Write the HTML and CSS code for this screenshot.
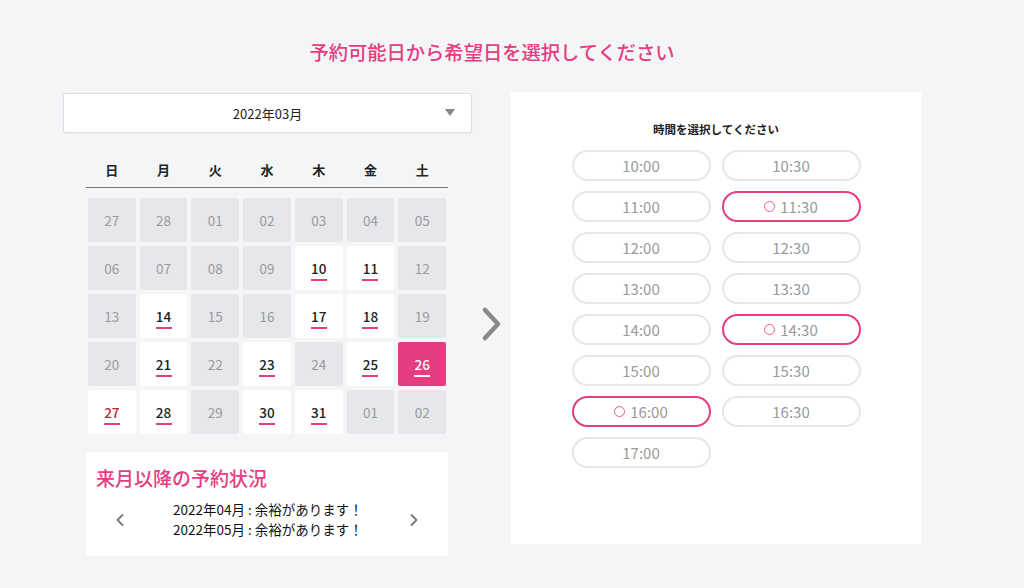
FILE: index.html
```html
<!DOCTYPE html>
<html lang="ja">

<head>
    <meta charset="UTF-8">
    <meta name="viewport" content="width=device-width, initial-scale=1.0">
    <title>予約</title>
    <link rel="stylesheet" href="styles.css">
</head>

<body>
    <div class="page">
        <h1 class="title">予約可能日から希望日を選択してください</h1>

        <div class="main">
            <!-- 左：カレンダー -->
            <div class="left">
                <div class="select">
                    <span>2022年03月</span>
                    <i class="caret"></i>
                </div>

                <div class="calendar">
                    <div class="week">
                        <span>日</span><span>月</span><span>火</span><span>水</span><span>木</span><span>金</span><span>土</span>
                    </div>
                    <div class="days">
                        <div class="day">27</div>
                        <div class="day">28</div>
                        <div class="day">01</div>
                        <div class="day">02</div>
                        <div class="day">03</div>
                        <div class="day">04</div>
                        <div class="day">05</div>

                        <div class="day">06</div>
                        <div class="day">07</div>
                        <div class="day">08</div>
                        <div class="day">09</div>
                        <div class="day open">10</div>
                        <div class="day open">11</div>
                        <div class="day">12</div>

                        <div class="day">13</div>
                        <div class="day open">14</div>
                        <div class="day">15</div>
                        <div class="day">16</div>
                        <div class="day open">17</div>
                        <div class="day open">18</div>
                        <div class="day">19</div>

                        <div class="day">20</div>
                        <div class="day open">21</div>
                        <div class="day">22</div>
                        <div class="day open">23</div>
                        <div class="day">24</div>
                        <div class="day open">25</div>
                        <div class="day open active">26</div>

                        <div class="day open sun">27</div>
                        <div class="day open">28</div>
                        <div class="day">29</div>
                        <div class="day open">30</div>
                        <div class="day open">31</div>
                        <div class="day">01</div>
                        <div class="day">02</div>
                    </div>
                </div>

                <div class="next">
                    <h2>来月以降の予約状況</h2>
                    <div class="next-body">
                        <svg class="chev" viewBox="0 0 8 12" width="8" height="12">
                            <path d="M6.5 1 L1.5 6 L6.5 11" />
                        </svg>
                        <div class="next-text">
                            <p>2022年04月 : 余裕があります！</p>
                            <p>2022年05月 : 余裕があります！</p>
                        </div>
                        <svg class="chev" viewBox="0 0 8 12" width="8" height="12">
                            <path d="M1.5 1 L6.5 6 L1.5 11" />
                        </svg>
                    </div>
                </div>
            </div>

            <!-- 中央の矢印 -->
            <div class="arrow">
                <svg viewBox="0 0 22 36" width="22" height="36">
                    <path d="M4 4 L17 18 L4 32" />
                </svg>
            </div>

            <!-- 右：時間 -->
            <div class="right">
                <p class="sub">時間を選択してください</p>
                <div class="times">
                    <button>10:00</button>
                    <button>10:30</button>
                    <button>11:00</button>
                    <button class="ok">11:30</button>
                    <button>12:00</button>
                    <button>12:30</button>
                    <button>13:00</button>
                    <button>13:30</button>
                    <button>14:00</button>
                    <button class="ok">14:30</button>
                    <button>15:00</button>
                    <button>15:30</button>
                    <button class="ok">16:00</button>
                    <button>16:30</button>
                    <button>17:00</button>
                </div>
            </div>
        </div>
    </div>
</body>

</html>
```

FILE: styles.css
```css
* {
    margin: 0;
    padding: 0;
    box-sizing: border-box;
}

body {
    background: #f4f5f7;
    font-family: "Noto Sans CJK JP", "Noto Sans", sans-serif;
    color: #222;
}

.page {
    width: 858px;
    margin-left: 63px;
    padding-top: 38px;
}

.title {
    text-align: center;
    color: #e63c82;
    font-size: 19.3px;
    font-weight: 500;
    line-height: 28px;
}

.main {
    display: flex;
    margin-top: 27px;
}

.left {
    width: 409px;
}

/* 月のセレクト */
.select {
    height: 40px;
    background: #fff;
    border: 1px solid #dcdde0;
    border-radius: 3px;
    box-shadow: 0 1px 2px rgba(0, 0, 0, .05);
    display: flex;
    align-items: center;
    justify-content: center;
    position: relative;
    font-size: 13px;
}

.select .caret {
    position: absolute;
    right: 16px;
    top: 15px;
    width: 0;
    height: 0;
    border-left: 5px solid transparent;
    border-right: 5px solid transparent;
    border-top: 7px solid #888;
}

.calendar {
    width: 362px;
    margin: 26px 0 0 23px;
}

.week {
    display: grid;
    grid-template-columns: repeat(7, 1fr);
    gap: 4px;
    padding: 0 2px 6px;
    border-bottom: 1px solid #777;
    font-size: 13px;
    font-weight: bold;
    line-height: 22px;
    text-align: center;
}

.days {
    display: grid;
    grid-template-columns: repeat(7, 1fr);
    gap: 4px;
    padding: 10px 2px 0;
}

.day {
    height: 44px;
    background: #e6e7eb;
    border-radius: 2px;
    color: #9a9a9a;
    font-size: 13.5px;
    display: flex;
    align-items: center;
    justify-content: center;
    position: relative;
}

.day.open {
    background: #fff;
    color: #222;
    font-weight: 500;
}

.day.open::after {
    content: "";
    position: absolute;
    left: 50%;
    bottom: 9px;
    width: 16px;
    height: 2px;
    margin-left: -8px;
    background: #e63c82;
}

.day.sun {
    color: #b8272e;
}

.day.active {
    background: #e63c82;
    color: #fff;
}

.day.active::after {
    background: #fff;
}

/* 来月以降 */
.next {
    width: 362px;
    margin: 18px 0 0 23px;
    background: #fff;
    padding: 12px 10px 17px;
}

.next h2 {
    color: #e63c82;
    font-size: 19px;
    font-weight: 500;
    line-height: 28px;
}

.next-body {
    display: flex;
    align-items: center;
    justify-content: space-between;
    margin-top: 8px;
    padding: 0 20px 0 20px;
}

.next-text {
    font-size: 13.5px;
    line-height: 19.5px;
    margin-left: 2px;
    color: #111;
}

.chev {
    fill: none;
    stroke: #777;
    stroke-width: 1.8;
    stroke-linecap: round;
    stroke-linejoin: round;
}

.arrow {
    width: 39px;
    display: flex;
    align-items: center;
    justify-content: center;
    padding-bottom: 2px;
}

.arrow svg {
    fill: none;
    stroke: #888;
    stroke-width: 4.5;
    stroke-linecap: round;
    stroke-linejoin: round;
}

/* 右の時間選択 */
.right {
    width: 410px;
    height: 452px;
    margin-top: -1px;
    background: #fff;
    padding-top: 28px;
}

.sub {
    text-align: center;
    font-size: 11.5px;
    font-weight: bold;
    line-height: 18px;
}

.times {
    width: 289px;
    margin: 12px auto 0;
    display: grid;
    grid-template-columns: 1fr 1fr;
    column-gap: 11px;
    row-gap: 10px;
}

.times button {
    height: 31px;
    background: #fff;
    border: 2px solid #e7e7eb;
    border-radius: 16px;
    color: #9a9a9a;
    font-family: inherit;
    font-size: 15px;
    display: flex;
    align-items: center;
    justify-content: center;
}

.times button.ok {
    border-color: #e63c82;
}

.times button.ok::before {
    content: "";
    width: 9px;
    height: 9px;
    border: 1.3px solid #ea5c96;
    border-radius: 50%;
    margin-right: 5px;
}
```
